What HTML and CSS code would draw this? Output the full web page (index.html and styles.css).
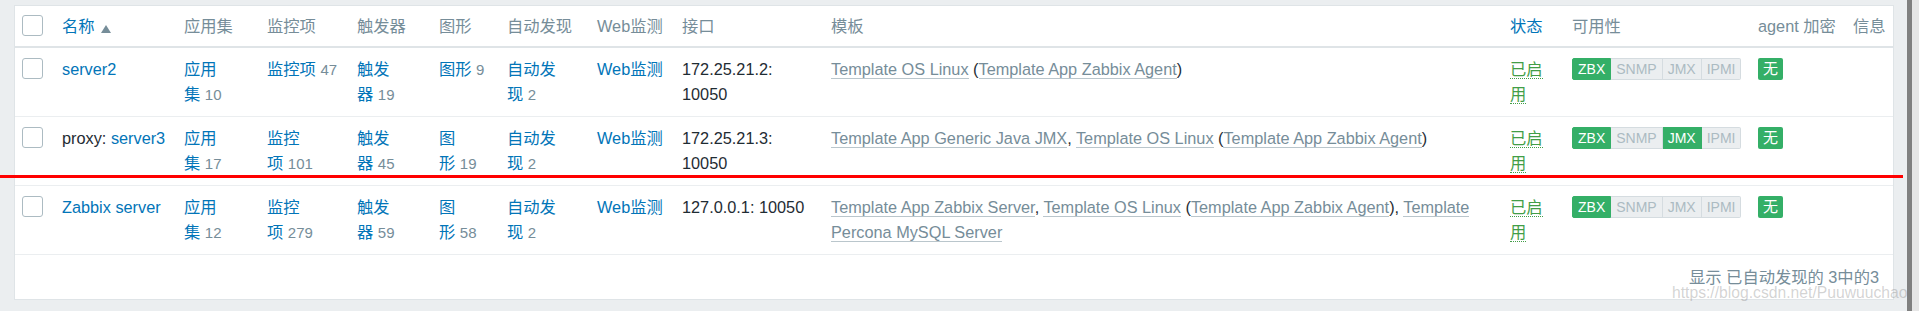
FILE: index.html
```html
<!DOCTYPE html>
<html lang="zh-CN">
<head>
    <meta charset="UTF-8">
    <meta name="viewport" content="width=device-width, initial-scale=1.0">
    <title>主机</title>
    <link rel="stylesheet" href="styles.css">
</head>
<body>
    <div class="page">
        <div class="content">
            <table class="list-table">
                <colgroup>
                    <col class="w-check">
                    <col class="w-name">
                    <col class="w-apps">
                    <col class="w-items">
                    <col class="w-triggers">
                    <col class="w-graphs">
                    <col class="w-discovery">
                    <col class="w-web">
                    <col class="w-iface">
                    <col class="w-templates">
                    <col class="w-status">
                    <col class="w-avail">
                    <col class="w-enc">
                    <col class="w-info">
                </colgroup>
                <thead>
                    <tr>
                        <th><input type="checkbox" class="check"></th>
                        <th><a href="#">名称</a><span class="arrow-up"></span></th>
                        <th>应用集</th>
                        <th>监控项</th>
                        <th>触发器</th>
                        <th>图形</th>
                        <th>自动发现</th>
                        <th>Web监测</th>
                        <th>接口</th>
                        <th>模板</th>
                        <th><a href="#">状态</a></th>
                        <th>可用性</th>
                        <th>agent 加密</th>
                        <th>信息</th>
                    </tr>
                </thead>
                <tbody>
                    <tr>
                        <td><input type="checkbox" class="check"></td>
                        <td><a href="#">server2</a></td>
                        <td><a href="#">应用集</a>&nbsp;<span class="count">10</span></td>
                        <td><a href="#">监控项</a>&nbsp;<span class="count">47</span></td>
                        <td><a href="#">触发器</a>&nbsp;<span class="count">19</span></td>
                        <td><a href="#">图形</a>&nbsp;<span class="count">9</span></td>
                        <td><a href="#">自动发现</a>&nbsp;<span class="count">2</span></td>
                        <td><a href="#">Web监测</a></td>
                        <td>172.25.21.2: 10050</td>
                        <td><a href="#" class="tpl">Template OS Linux</a> (<a href="#" class="tpl">Template App Zabbix Agent</a>)</td>
                        <td><a href="#" class="enabled">已启用</a></td>
                        <td>
                            <div class="avail">
                                <span class="on">ZBX</span><span>SNMP</span><span>JMX</span><span>IPMI</span>
                            </div>
                        </td>
                        <td><span class="enc">无</span></td>
                        <td></td>
                    </tr>
                    <tr>
                        <td><input type="checkbox" class="check"></td>
                        <td>proxy: <a href="#">server3</a></td>
                        <td><a href="#">应用集</a>&nbsp;<span class="count">17</span></td>
                        <td><a href="#">监控项</a>&nbsp;<span class="count">101</span></td>
                        <td><a href="#">触发器</a>&nbsp;<span class="count">45</span></td>
                        <td><a href="#">图形</a>&nbsp;<span class="count">19</span></td>
                        <td><a href="#">自动发现</a>&nbsp;<span class="count">2</span></td>
                        <td><a href="#">Web监测</a></td>
                        <td>172.25.21.3: 10050</td>
                        <td><a href="#" class="tpl">Template App Generic Java JMX</a>, <a href="#" class="tpl">Template OS Linux</a> (<a href="#" class="tpl">Template App Zabbix Agent</a>)</td>
                        <td><a href="#" class="enabled">已启用</a></td>
                        <td>
                            <div class="avail">
                                <span class="on">ZBX</span><span>SNMP</span><span class="on">JMX</span><span>IPMI</span>
                            </div>
                        </td>
                        <td><span class="enc">无</span></td>
                        <td></td>
                    </tr>
                    <tr>
                        <td><input type="checkbox" class="check"></td>
                        <td><a href="#">Zabbix server</a></td>
                        <td><a href="#">应用集</a>&nbsp;<span class="count">12</span></td>
                        <td><a href="#">监控项</a>&nbsp;<span class="count">279</span></td>
                        <td><a href="#">触发器</a>&nbsp;<span class="count">59</span></td>
                        <td><a href="#">图形</a>&nbsp;<span class="count">58</span></td>
                        <td><a href="#">自动发现</a>&nbsp;<span class="count">2</span></td>
                        <td><a href="#">Web监测</a></td>
                        <td>127.0.0.1: 10050</td>
                        <td><a href="#" class="tpl">Template App Zabbix Server</a>, <a href="#" class="tpl">Template OS Linux</a> (<a href="#" class="tpl">Template App Zabbix Agent</a>), <a href="#" class="tpl">Template Percona MySQL Server</a></td>
                        <td><a href="#" class="enabled">已启用</a></td>
                        <td>
                            <div class="avail">
                                <span class="on">ZBX</span><span>SNMP</span><span>JMX</span><span>IPMI</span>
                            </div>
                        </td>
                        <td><span class="enc">无</span></td>
                        <td></td>
                    </tr>
                </tbody>
            </table>
            <div class="paging">显示 已自动发现的 3中的3</div>
        </div>
    </div>
    <div class="scrollbar"></div>

    <div class="mark-line"></div>
    <div class="watermark">https://blog.csdn.net/Puuwuuchao</div>
</body>
</html>
```

FILE: styles.css
```css
body {
    margin: 0;
    height: 311px;
    display: flex;
    position: relative;
    overflow: hidden;
    background-color: #ebeef0;
    font-family: "Liberation Sans", "Noto Sans CJK SC", sans-serif;
    font-size: 16.3px;
    color: #1f2c33;
}

a {
    color: #0275b8;
    text-decoration: none;
}

.page {
    flex: 1;
    padding: 5px 13px 0 14px;
}

.content {
    background-color: #fff;
    border: 1px solid #dfe4e7;
}

.scrollbar {
    width: 7px;
    background-color: #e6e6e6;
    border-left: 5px solid #808080;
}

/* table */
.list-table {
    width: 100%;
    border-collapse: collapse;
    table-layout: fixed;
}

.w-check { width: 40px; }
.w-name { width: 122px; }
.w-apps { width: 83px; }
.w-items { width: 90px; }
.w-triggers { width: 82px; }
.w-graphs { width: 68px; }
.w-discovery { width: 90px; }
.w-web { width: 85px; }
.w-iface { width: 149px; }
.w-templates { width: 679px; }
.w-status { width: 62px; }
.w-avail { width: 186px; }
.w-enc { width: 95px; }
.w-info { width: 47px; }

.list-table th,
.list-table td {
    text-align: left;
    vertical-align: top;
    line-height: 25px;
    padding: 9px 9px 9px 7px;
}

.list-table th {
    font-weight: normal;
    color: #768d99;
    padding-top: 8px;
    padding-bottom: 7px;
    border-bottom: 2px solid #dfe4e7;
}

.list-table td {
    border-bottom: 1px solid #ebeef0;
}

.list-table th:last-child,
.list-table td:last-child {
    padding-right: 0;
}

.check {
    appearance: none;
    -webkit-appearance: none;
    display: block;
    width: 21px;
    height: 21px;
    margin: 1px 0 0 0;
    border: 1px solid #acbbc2;
    border-radius: 3px;
    background-color: #fff;
}

.arrow-up {
    display: inline-block;
    width: 0;
    height: 0;
    margin-left: 6px;
    border-left: 5px solid transparent;
    border-right: 5px solid transparent;
    border-bottom: 8px solid #768d99;
    vertical-align: -1px;
}

.count {
    font-size: 15px;
    line-height: 1;
    color: #768d99;
}

.tpl {
    color: #768d99;
    border-bottom: 1px solid rgba(118, 141, 153, 0.5);
}

.enabled {
    color: #429e47;
    border-bottom: 1px dotted #429e47;
}

/* availability */
.avail {
    display: flex;
    width: max-content;
    margin-top: 1px;
    font-size: 14px;
    line-height: 20px;
}

.avail span {
    padding: 0 5px;
    color: #acbbc2;
    background-color: #ebeef0;
    border: 1px solid #d5dce0;
    border-left: none;
}

.avail span:first-child {
    border-left: 1px solid #d5dce0;
    border-radius: 2px 0 0 2px;
}

.avail span:last-child {
    border-radius: 0 2px 2px 0;
}

.avail span.on {
    color: #fff;
    background-color: #34af67;
    border-color: #34af67;
}

.enc {
    display: inline-block;
    vertical-align: top;
    margin-top: 1px;
    padding: 0 5px;
    font-size: 15px;
    line-height: 22px;
    color: #fff;
    background-color: #34af67;
    border-radius: 2px;
}

.paging {
    text-align: right;
    padding-right: 14px;
    line-height: 44px;
    color: #768d99;
}

/* overlays on the screenshot */
.mark-line {
    position: absolute;
    left: 0;
    top: 175px;
    width: 1903px;
    height: 3px;
    background-color: #ff0000;
}

.watermark {
    position: absolute;
    left: 1672px;
    top: 283px;
    font-size: 15.7px;
    line-height: 20px;
    color: rgba(128, 128, 128, 0.35);
    white-space: nowrap;
}
```
